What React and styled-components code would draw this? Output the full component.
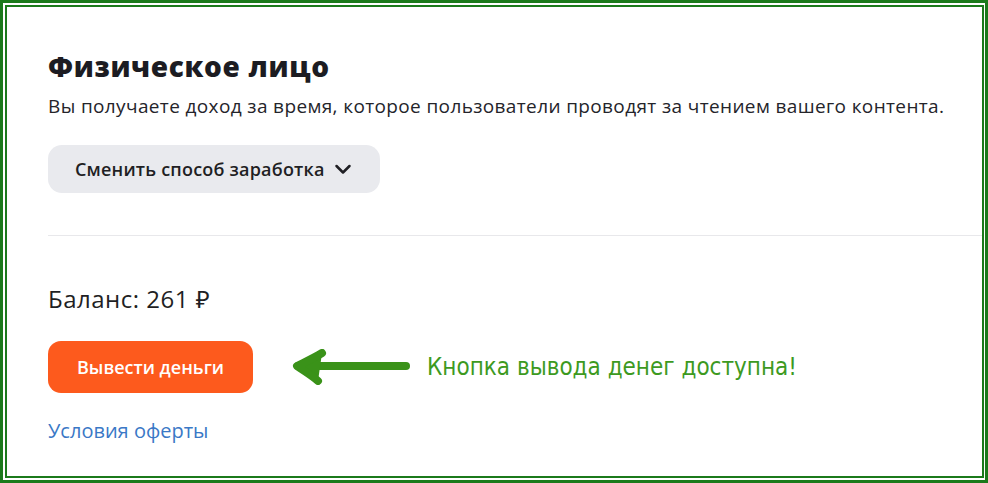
import React from "react";
import styled, { createGlobalStyle } from "styled-components";

const Global = createGlobalStyle`
  html, body { margin: 0; padding: 0; background: #ffffff; }
  * { box-sizing: border-box; }
`;

const Frame = styled.div`
  width: 988px;
  height: 483px;
  border: 3px solid #1b7a1b;
  padding: 2px 1px 2px 2px;
  background: #fff;
`;

const Inner = styled.div`
  height: 100%;
  border: 2px solid #1b7a1b;
  padding: 42px 0 0 41px;
  font-family: "Open Sans", "Noto Sans", sans-serif;
  color: #1f1f24;
`;

const Title = styled.h1`
  margin: 0;
  font-size: 28px;
  line-height: 34px;
  letter-spacing: 0.7px;
  font-weight: 800;
  color: #1c1c22;
`;

const Desc = styled.p`
  margin: 11px 0 0;
  font-size: 19px;
  line-height: 24px;
  letter-spacing: 0.37px;
  color: #24242a;
`;

const MethodButton = styled.button`
  margin-top: 27px;
  height: 48px;
  width: 332px;
  border: none;
  border-radius: 14px;
  background: #e9eaee;
  display: flex;
  align-items: center;
  gap: 8px;
  padding: 0 0 0 27px;
  font-family: inherit;
  font-size: 18px;
  letter-spacing: 0.2px;
  font-weight: 600;
  color: #1f1f24;
  cursor: pointer;
`;

const Divider = styled.hr`
  margin: 42px 0 0;
  border: none;
  border-top: 1px solid #e8e8eb;
`;

const Balance = styled.div`
  margin-top: 48px;
  font-size: 24px;
  line-height: 30px;
  letter-spacing: 0.5px;
  color: #1f1f24;
`;

const ActionRow = styled.div`
  margin-top: 27px;
  display: flex;
  align-items: center;
`;

const WithdrawButton = styled.button`
  width: 205px;
  height: 52px;
  border: none;
  border-radius: 13px;
  background: #fd5a1d;
  color: #fff;
  font-family: inherit;
  font-size: 18px;
  font-weight: 600;
  cursor: pointer;
`;

const Arrow = styled.svg`
  margin-left: 39px;
  flex: none;
`;

const Note = styled.span`
  margin-left: 15px;
  font-family: "DejaVu Sans Condensed", "DejaVu Sans", sans-serif;
  font-stretch: condensed;
  font-size: 24px;
  color: #3d9a1f;
  white-space: nowrap;
`;

const OfferLink = styled.a`
  display: inline-block;
  margin-top: 25px;
  font-size: 20px;
  line-height: 26px;
  color: #3a78c6;
  text-decoration: none;
`;

const Chevron = () => (
  <svg width="20" height="20" viewBox="0 0 20 20" fill="none">
    <path d="M3.5 7l6.5 6.5 6.5-6.5" stroke="#1f1f24" strokeWidth="2.5" strokeLinecap="round" strokeLinejoin="round" />
  </svg>
);

export default function App() {
  return (
    <>
      <Global />
      <Frame>
        <Inner>
          <Title>Физическое лицо</Title>
          <Desc>Вы получаете доход за время, которое пользователи проводят за чтением вашего контента.</Desc>
          <MethodButton>
            Сменить способ заработка
            <Chevron />
          </MethodButton>
          <Divider />
          <Balance>Баланс: 261 ₽</Balance>
          <ActionRow>
            <WithdrawButton>Вывести деньги</WithdrawButton>
            <Arrow width="120" height="36" viewBox="0 0 120 36">
              <path d="M6 17 L114 17" stroke="#3a9219" strokeWidth="8" strokeLinecap="round" />
              <path d="M30 4 C22 9 13 13 5 17 C12 22 19 26 26 32" stroke="#3a9219" strokeWidth="8" strokeLinecap="round" strokeLinejoin="round" fill="#3a9219" />
            </Arrow>
            <Note>Кнопка вывода денег доступна!</Note>
          </ActionRow>
          <OfferLink href="#">Условия оферты</OfferLink>
        </Inner>
      </Frame>
    </>
  );
}
